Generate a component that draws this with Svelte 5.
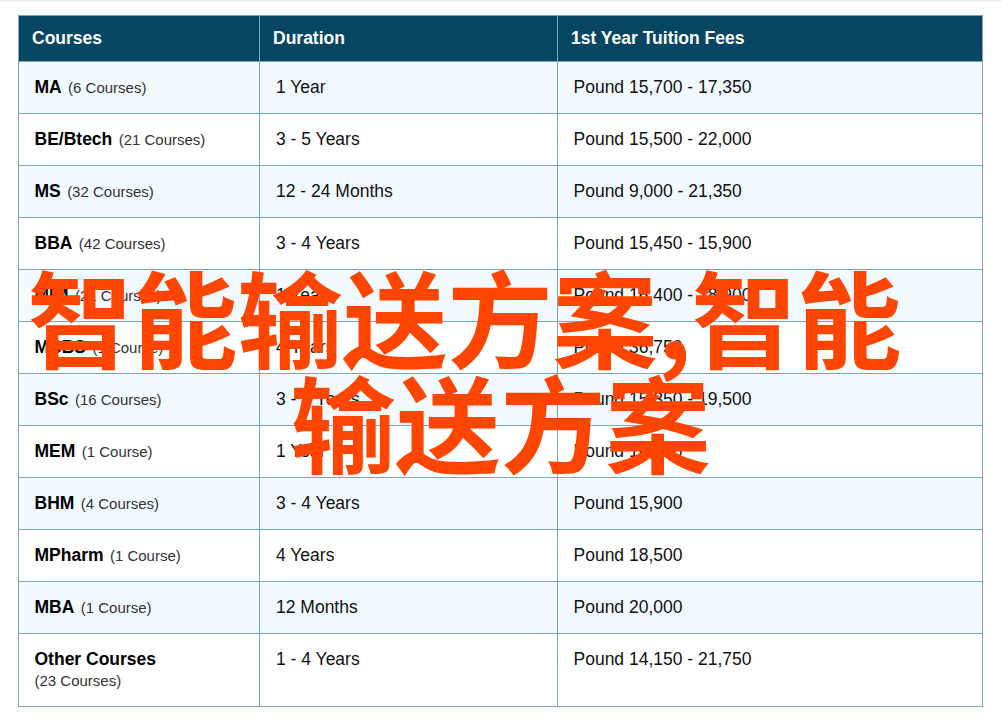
<script>
  const rows = [
    { name: 'MA', count: '(6 Courses)', duration: '1 Year', fees: 'Pound 15,700 - 17,350' },
    { name: 'BE/Btech', count: '(21 Courses)', duration: '3 - 5 Years', fees: 'Pound 15,500 - 22,000' },
    { name: 'MS', count: '(32 Courses)', duration: '12 - 24 Months', fees: 'Pound 9,000 - 21,350' },
    { name: 'BBA', count: '(42 Courses)', duration: '3 - 4 Years', fees: 'Pound 15,450 - 15,900' },
    { name: 'MIM', count: '(21 Courses)', duration: '1 Year', fees: 'Pound 16,400 - 18,900' },
    { name: 'MBBS', count: '(1 Course)', duration: '4 Years', fees: 'Pound 36,750' },
    { name: 'BSc', count: '(16 Courses)', duration: '3 - 4 Years', fees: 'Pound 15,350 - 19,500' },
    { name: 'MEM', count: '(1 Course)', duration: '1 Year', fees: 'Pound 16,500' },
    { name: 'BHM', count: '(4 Courses)', duration: '3 - 4 Years', fees: 'Pound 15,900' },
    { name: 'MPharm', count: '(1 Course)', duration: '4 Years', fees: 'Pound 18,500' },
    { name: 'MBA', count: '(1 Course)', duration: '12 Months', fees: 'Pound 20,000' },
    { name: 'Other Courses', count: '(23 Courses)', duration: '1 - 4 Years', fees: 'Pound 14,150 - 21,750', wrap: true },
  ];
</script>

<div class="page">
  <table>
    <thead>
      <tr>
        <th class="col-course">Courses</th>
        <th class="col-duration">Duration</th>
        <th>1st Year Tuition Fees</th>
      </tr>
    </thead>
    <tbody>
      {#each rows as row}
        <tr>
          <td class="course">
            <strong>{row.name}</strong>
            {#if row.wrap}<br />{/if}
            <span class="count">{row.count}</span>
          </td>
          <td class="duration">{row.duration}</td>
          <td class="fees">{row.fees}</td>
        </tr>
      {/each}
    </tbody>
  </table>

  <div class="title">
    <div class="line-first">智能输送方案,智能</div>
    <div>输送方案</div>
  </div>
</div>

<style>
  :global(body) {
    margin: 0;
    background: #fff;
  }

  .page {
    position: relative;
    width: 1001px;
    height: 720px;
    padding: 15px 18px 0;
    box-sizing: border-box;
    overflow: hidden;
    font-family: "Liberation Sans", Arial, sans-serif;
    box-shadow: inset 0 3px 2px -2px #e4e4e4;
  }

  table {
    width: 965px;
    border-collapse: collapse;
    table-layout: fixed;
    font-size: 17.5px;
    color: #111;
  }

  th,
  td {
    border: 1px solid #7aa5bd;
    text-align: left;
    vertical-align: top;
  }

  th {
    height: 46px;
    padding: 12px 13px 0;
    box-sizing: border-box;
    background: #064663;
    color: #fff;
    font-size: 17.5px;
    font-weight: 700;
  }

  .col-course {
    width: 241px;
  }

  .col-duration {
    width: 298px;
  }

  td {
    height: 52px;
    box-sizing: border-box;
    padding-top: 15px;
    line-height: 20px;
  }

  tbody tr:nth-child(odd) td {
    background: #f2f9ff;
  }

  .course {
    padding-left: 15.5px;
  }

  .course strong {
    color: #000;
    margin-right: 1.5px;
  }

  .count {
    font-size: 15px;
    color: #333;
  }

  .duration {
    padding-left: 16px;
  }

  .fees {
    padding-left: 15.5px;
  }

  tbody tr:last-child td {
    height: 73px;
  }

  tbody tr:last-child .count {
    line-height: 24px;
  }

  .title {
    position: absolute;
    left: 18px;
    top: 262px;
    width: 965px;
    text-align: center;
    font-family: "Noto Sans CJK SC", sans-serif;
    font-size: 105px;
    font-weight: 700;
    line-height: 105px;
    color: #ff4500;
  }

  .line-first {
    padding-right: 72px;
  }
</style>
